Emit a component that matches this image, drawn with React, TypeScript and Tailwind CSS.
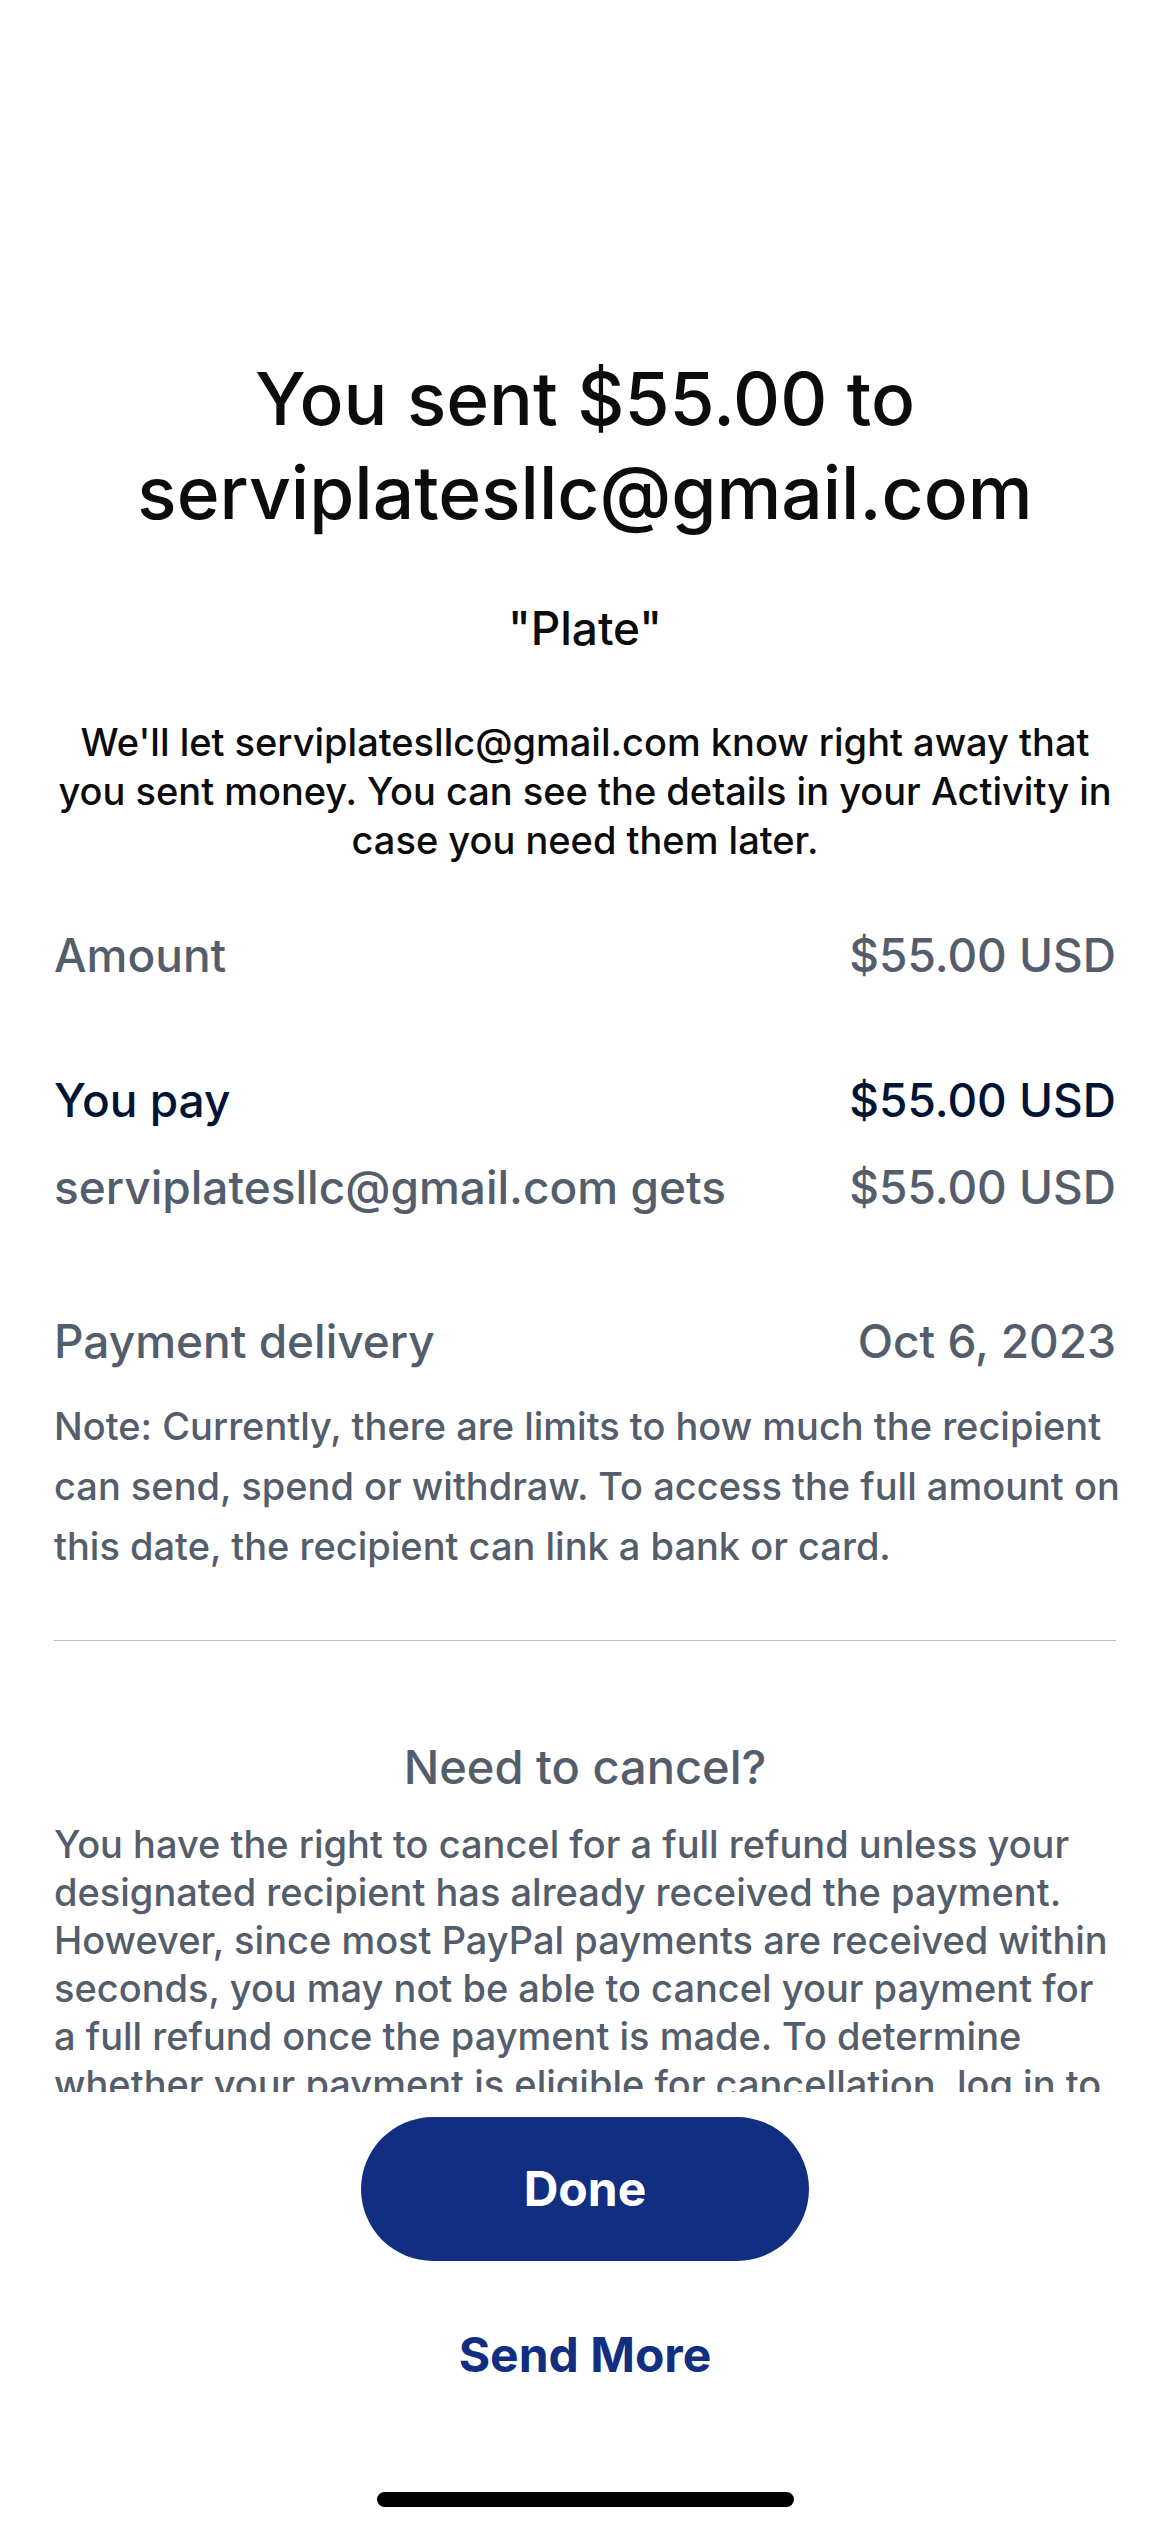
type RowProps = { label: string; value: string; className: string };

function Row({ label, value, className }: RowProps) {
  return (
    <div className={`flex items-center justify-between text-[46px] leading-[60px] ${className}`}>
      <dt>{label}</dt>
      <dd>{value}</dd>
    </div>
  );
}

export default function App() {
  return (
    <div className="flex h-screen flex-col bg-white font-['Inter','Liberation_Sans',sans-serif] font-medium text-[#0c0c0d]">
      <main className="min-h-0 flex-1 overflow-hidden px-[54px] pt-[352px] text-[#545d6b]">
        <header className="text-center text-[#0c0c0d]">
          <h1 className="text-[73px] leading-[94px] font-medium">
            You sent $55.00 to
            <br />
            serviplatesllc@gmail.com
          </h1>
          <p className="mt-[58px] text-[46px] leading-[60px]">"Plate"</p>
          <p className="mt-[60px] text-[38px] leading-[49px] whitespace-nowrap">
            We'll let serviplatesllc@gmail.com know right away that
            <br />
            you sent money. You can see the details in your Activity in
            <br />
            case you need them later.
          </p>
        </header>
        <dl className="mt-[60px]">
          <Row label="Amount" value="$55.00 USD" className="" />
          <Row label="You pay" value="$55.00 USD" className="mt-[85px] text-[#001435]" />
          <Row label="serviplatesllc@gmail.com gets" value="$55.00 USD" className="mt-[27px]" />
          <Row label="Payment delivery" value="Oct 6, 2023" className="mt-[94px]" />
        </dl>
        <p className="mt-[25px] text-[38px] leading-[60px] whitespace-nowrap">
          Note: Currently, there are limits to how much the recipient
          <br />
          can send, spend or withdraw. To access the full amount on
          <br />
          this date, the recipient can link a bank or card.
        </p>
        <hr className="mt-[64px] border-t border-[#b7bfc4]" />
        <section>
          <h2 className="mt-[96px] text-center text-[47px] leading-[60px] font-medium">Need to cancel?</h2>
          <p className="mt-[23px] text-[38px] leading-[48px] whitespace-nowrap">
            You have the right to cancel for a full refund unless your
            <br />
            designated recipient has already received the payment.
            <br />
            However, since most PayPal payments are received within
            <br />
            seconds, you may not be able to cancel your payment for
            <br />
            a full refund once the payment is made. To determine
            <br />
            whether your payment is eligible for cancellation, log in to
          </p>
        </section>
      </main>
      <footer className="flex shrink-0 flex-col items-center pt-[25px] pb-[25px]">
        <button type="button" className="h-[144px] w-[448px] rounded-full bg-[#112e81] text-[48px] leading-[60px] font-bold text-white">
          Done
        </button>
        <button type="button" className="mt-[64px] text-[48px] leading-[60px] font-bold text-[#112e81]">
          Send More
        </button>
        <div className="mt-[107px] h-[15px] w-[417px] rounded-full bg-black" />
      </footer>
    </div>
  );
}
